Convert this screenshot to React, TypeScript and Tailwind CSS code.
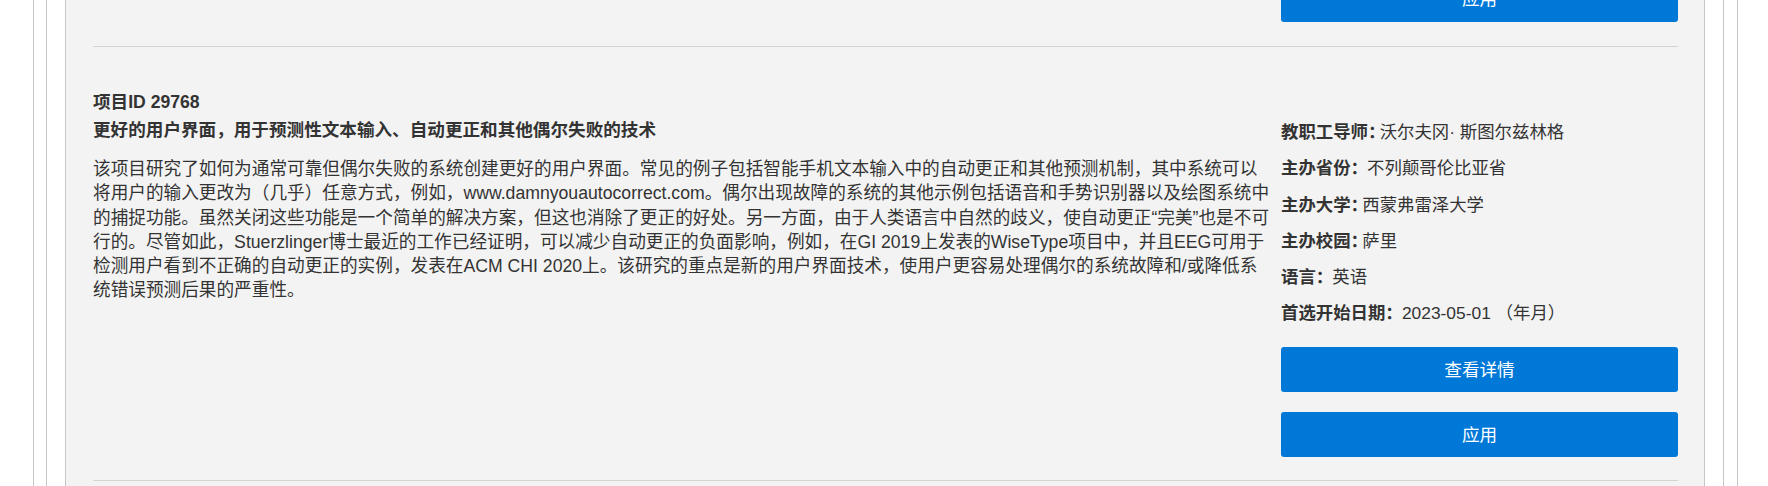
import React from "react"

const descLines = [
  "该项目研究了如何为通常可靠但偶尔失败的系统创建更好的用户界面。常见的例子包括智能手机文本输入中的自动更正和其他预测机制，其中系统可以",
  "将用户的输入更改为（几乎）任意方式，例如，www.damnyouautocorrect.com。偶尔出现故障的系统的其他示例包括语音和手势识别器以及绘图系统中",
  "的捕捉功能。虽然关闭这些功能是一个简单的解决方案，但这也消除了更正的好处。另一方面，由于人类语言中自然的歧义，使自动更正“完美”也是不可",
  "行的。尽管如此，Stuerzlinger博士最近的工作已经证明，可以减少自动更正的负面影响，例如，在GI 2019上发表的WiseType项目中，并且EEG可用于",
  "检测用户看到不正确的自动更正的实例，发表在ACM CHI 2020上。该研究的重点是新的用户界面技术，使用户更容易处理偶尔的系统故障和/或降低系",
  "统错误预测后果的严重性。",
]

const details = [
  { label: "教职工导师：", value: "沃尔夫冈· 斯图尔兹林格" },
  { label: "主办省份：", value: " 不列颠哥伦比亚省" },
  { label: "主办大学：", value: "西蒙弗雷泽大学" },
  { label: "主办校园：", value: "萨里" },
  { label: "语言：", value: " 英语" },
  { label: "首选开始日期：", value: " 2023-05-01 （年月）" },
]

function BlueButton({ children, className = "" }: { children: React.ReactNode; className?: string }) {
  return (
    <button
      className={
        "flex h-[45px] w-[397px] items-center justify-center rounded-[3px] bg-[#0078d7] text-[17.6px] text-white " +
        className
      }
    >
      {children}
    </button>
  )
}

export default function App() {
  return (
    <div
      className="h-[486px] w-[1768px] overflow-hidden bg-white text-[#333333]"
      style={{ fontFamily: '"Liberation Sans", "Noto Sans CJK SC", sans-serif' }}
    >
      {/* outer frames */}
      <div className="ml-[33px] h-full w-[1705px] border-x border-[#c6c6c6] bg-white pl-[12px] pr-[13px]">
        <div className="h-full border-x border-[#c6c6c6] bg-white px-[18px]">
          {/* grey panel */}
          <div className="h-full overflow-hidden border-x border-[#c6c6c6] bg-[#f3f3f3] pl-[27px] pr-[26px]">
            {/* previous card's apply button */}
            <div className="flex justify-end">
              <BlueButton className="mt-[-23px]">应用</BlueButton>
            </div>

            <div className="mt-[24px] border-t border-[#d4d4d4]" />

            {/* project card */}
            <div className="mt-[43px] text-[17.6px] font-bold leading-[24px]">项目ID 29768</div>

            <div className="mt-[4px] flex justify-between">
              <div className="w-[1170px]">
                <h2 className="text-[17.6px] font-bold leading-[24px]">
                  更好的用户界面，用于预测性文本输入、自动更正和其他偶尔失败的技术
                </h2>
                <p className="mt-[15px] whitespace-nowrap text-[17.65px] leading-[24.3px]">
                  {descLines.map((line, i) => (
                    <React.Fragment key={i}>
                      {line}
                      {i < descLines.length - 1 && <br />}
                    </React.Fragment>
                  ))}
                </p>
              </div>

              <div className="w-[397px] pt-[2px]">
                <div className="flex flex-col gap-[12.3px]">
                  {details.map((d) => (
                    <div key={d.label} className="whitespace-pre text-[17.4px] leading-[24px]">
                      <span className="mr-[3px] font-bold [font-feature-settings:'palt']">{d.label}</span>
                      <span>{d.value}</span>
                    </div>
                  ))}
                </div>
                <div className="mt-[22px] flex flex-col gap-[20px]">
                  <BlueButton>查看详情</BlueButton>
                  <BlueButton>应用</BlueButton>
                </div>
              </div>
            </div>

            <div className="mt-[23px] border-t border-[#d4d4d4]" />
          </div>
        </div>
      </div>
    </div>
  )
}
